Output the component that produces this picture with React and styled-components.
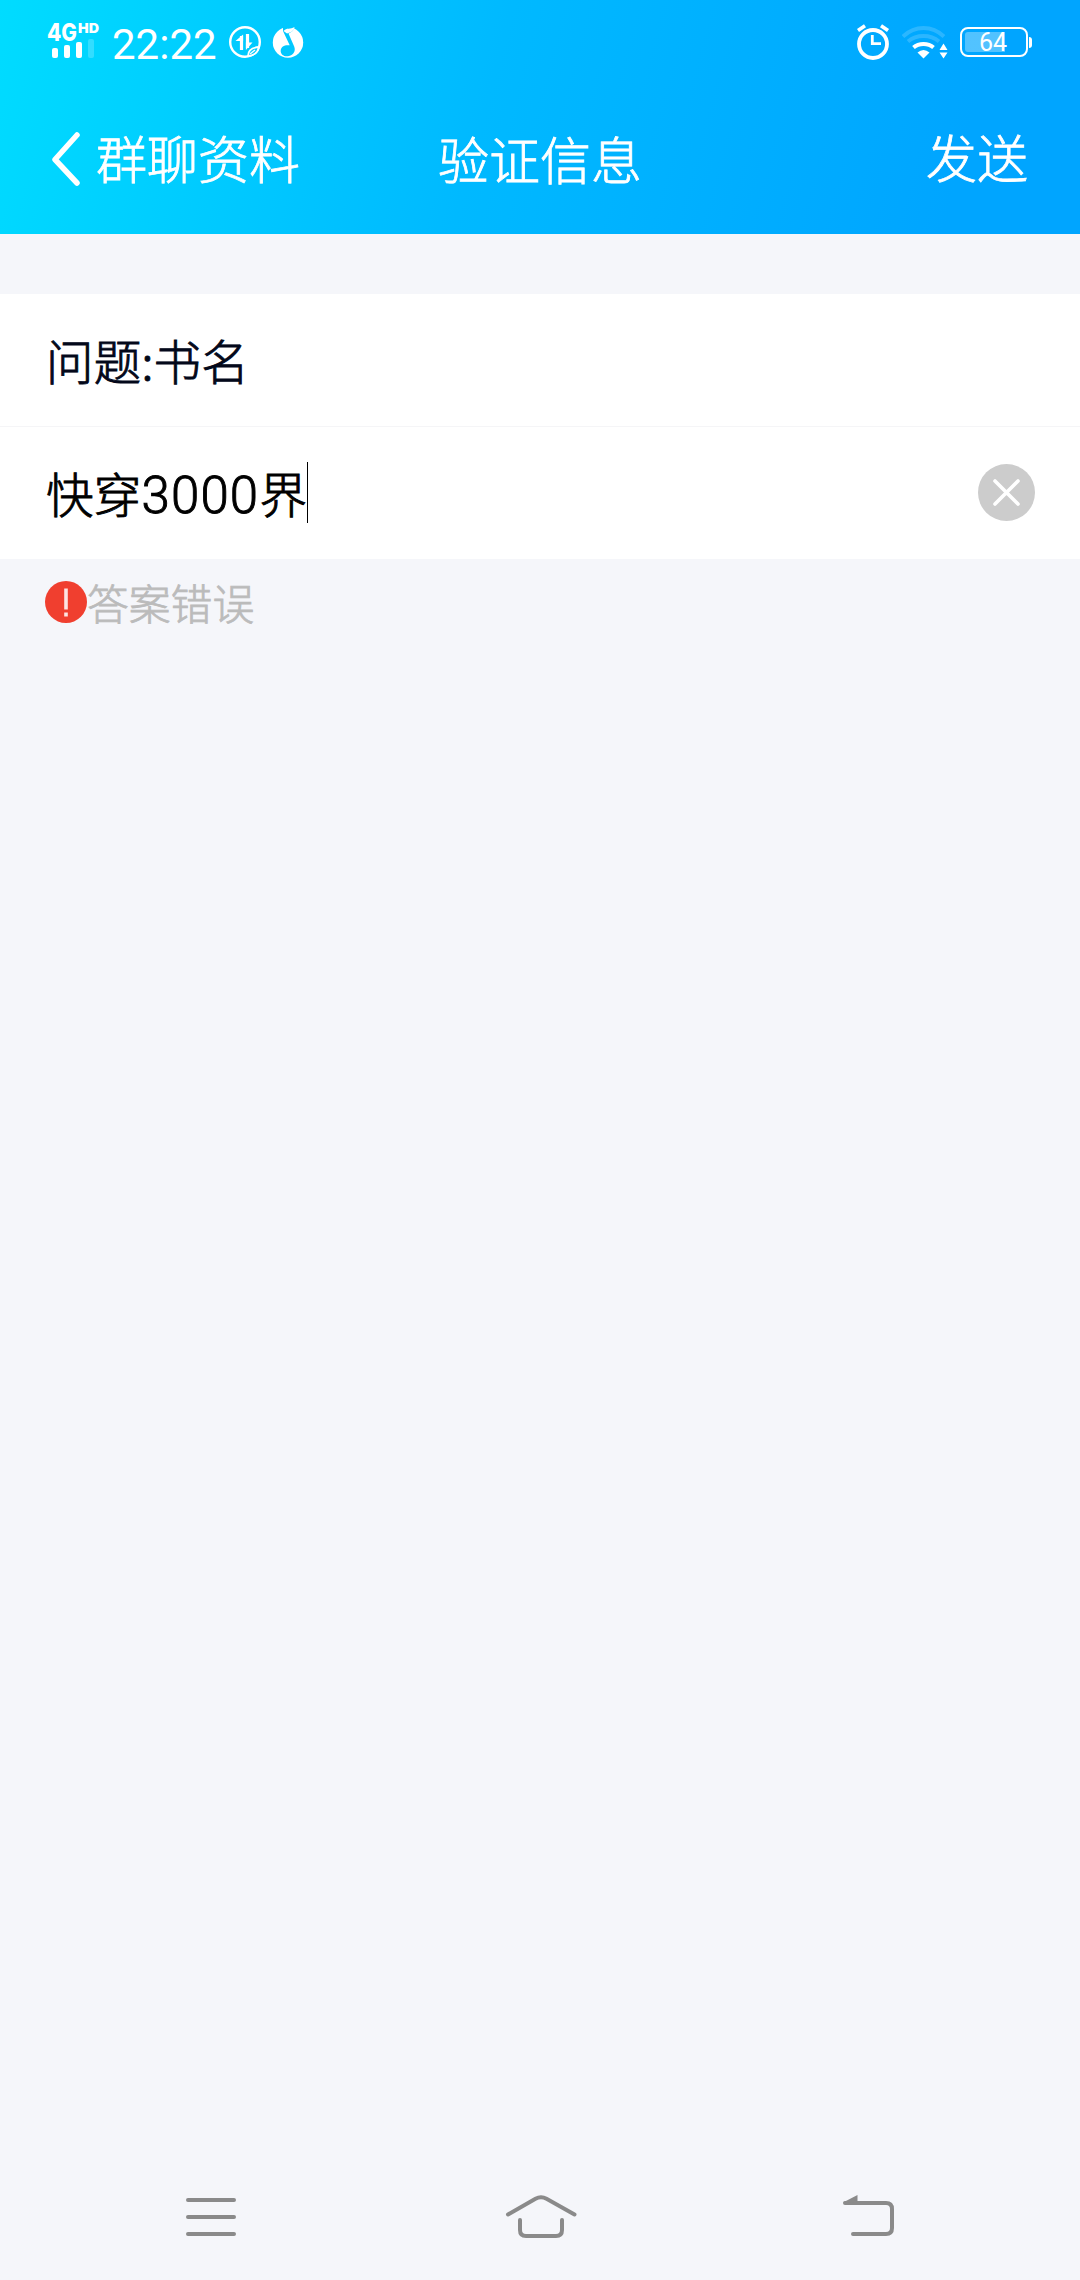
import React from 'react';
import styled, { createGlobalStyle } from 'styled-components';

const GlobalStyle = createGlobalStyle`
  * {
    box-sizing: border-box;
  }
  body {
    margin: 0;
    background: #f5f6fa;
    font-family: 'Noto Sans CJK SC', sans-serif;
  }
`;

const SignalIcon = () => (
  <svg width="53" height="52" viewBox="0 0 53 52" fill="#fff">
    <text x="0" y="25" fontFamily="Inter" fontSize="24" fontWeight="800" textLength="30" lengthAdjust="spacingAndGlyphs">
      4G
    </text>
    <text x="31" y="17" fontFamily="Inter" fontSize="13.5" fontWeight="900" textLength="21" lengthAdjust="spacingAndGlyphs">
      HD
    </text>
    <rect x="5" y="32" width="6" height="10" rx="2" />
    <rect x="17" y="29" width="6" height="13" rx="2" />
    <rect x="29" y="26" width="6" height="16" rx="2" />
    <rect x="41" y="23" width="6" height="19" rx="2" opacity="0.2" />
  </svg>
);

const DataIcon = () => (
  <svg width="32" height="32" viewBox="0 0 32 32" fill="none" stroke="#fff">
    <circle cx="16" cy="16" r="14.8" strokeWidth="2.4" />
    <path d="M12.500 24V10M18.500 8v14" strokeWidth="3.200" />
    <path d="M14.100 8.500V15H6.500zM16.900 24V16.500H23.500z" fill="#fff" stroke="none" />
    <path d="M19 30c0-5 4-8.500 11-9-1 5-5 8.500-11 9z" fill="#00ccff" strokeWidth="1.800" />
    <path d="M21 28l5-4" strokeWidth="1.400" />
  </svg>
);

const MusicIcon = () => (
  <svg width="32" height="32" viewBox="0 0 32 32">
    <circle cx="16" cy="16.500" r="15.200" fill="#fff" />
    <path
      d="M11 0h11.500L21 4.500c-1.500 1.500-3 2.300-4.500 3l5.700 13c1.800 4.500-.8 8.600-5.200 9.600-5 1-8.600-1.600-8.300-5.600.4-4.300 4.300-5.900 9-5.200L11 5z"
      fill="#00c8ff"
    />
    <path d="M11.500 5C14.500 1.500 18.500 3.500 22.500 1c-.3 3.500-3.200 5.500-7.500 6.500z" fill="#fff" />
  </svg>
);

const AlarmIcon = () => (
  <svg width="34" height="36" viewBox="0 0 34 36" fill="none" stroke="#fff">
    <circle cx="16" cy="20" r="14" strokeWidth="3.800" />
    <path d="M15.300 11v8.700H24" strokeWidth="2.800" />
    <path d="M1 6.500l7-4.800M31 6.500l-7-4.800" strokeWidth="3.600" />
  </svg>
);

const WifiIcon = () => (
  <svg width="47" height="34" viewBox="0 0 47 34" fill="none" stroke="#fff">
    <path d="M1 11.500Q10 3 21.500 3T42 11.500" strokeWidth="3.800" opacity="0.17" />
    <path d="M6 16.500Q12.500 11 21.500 11T37 16.500" strokeWidth="3.800" opacity="0.17" />
    <path d="M11.500 22.500Q15.500 19 21.500 19t10 3.500" strokeWidth="4" />
    <path d="M15.500 27.500q6-5 12 0l-6 6z" fill="#fff" stroke="none" />
    <path d="M41.500 18.500l4 6.500h-8zM41.500 33.500l-4-6h8z" fill="#fff" stroke="none" />
  </svg>
);

const BackIcon = () => (
  <svg width="28" height="54" viewBox="0 0 28 54" fill="none">
    <path
      d="M25 3L3 27.500 25 51"
      stroke="#fff"
      strokeWidth="5.500"
      strokeLinecap="round"
      strokeLinejoin="round"
    />
  </svg>
);

const ClearIcon = () => (
  <svg width="57" height="57" viewBox="0 0 57 57">
    <circle cx="28.500" cy="28.500" r="28.500" fill="#ccc" />
    <path d="M17 17l23 23M40 17l-23 23" stroke="#fff" strokeWidth="3.600" strokeLinecap="round" />
  </svg>
);

const ErrorIcon = () => (
  <svg width="42" height="42" viewBox="0 0 42 42">
    <circle cx="21" cy="21" r="21" fill="#f03f2f" />
    <path d="M21 7.500v21M21 31.500v4" stroke="#fde4e2" strokeWidth="3.600" />
  </svg>
);

const MenuIcon = () => (
  <svg width="50" height="44" viewBox="0 0 50 44" stroke="#8a8a8a" strokeWidth="4" strokeLinecap="round">
    <path d="M2 5h46M2 22h46M2 39h46" />
  </svg>
);

const HomeIcon = () => (
  <svg width="76" height="44" viewBox="0 0 76 44" fill="none" stroke="#8a8a8a" strokeWidth="4" strokeLinecap="round">
    <path d="M7 19.500L34.500 3.700q5.500-3 11 0L73.500 19.500" />
    <path d="M19 25v10q0 6 6 6h30q6 0 6-6V25" />
  </svg>
);

const ReturnIcon = () => (
  <svg width="52" height="44" viewBox="0 0 52 44" fill="none" stroke="#8a8a8a" strokeWidth="4" strokeLinecap="round">
    <path d="M3 8h41q6 0 6 6v19q0 6-6 6H11" />
    <path d="M1 7.500L15.500 0v8z" fill="#8a8a8a" stroke="none" />
  </svg>
);

const App = () => (
  <Screen>
    <GlobalStyle />
    <Header>
      <StatusBar>
        <StatusGroup>
          <SignalIcon />
          <Clock>22:22</Clock>
          <DataIcon />
          <MusicIcon />
        </StatusGroup>
        <StatusGroup>
          <AlarmIcon />
          <WifiIcon />
          <Battery>
            <BatteryBody>64</BatteryBody>
            <BatteryTip />
          </Battery>
        </StatusGroup>
      </StatusBar>
      <TitleBar>
        <BackButton>
          <BackIcon />
          <BarText lift={5}>群聊资料</BarText>
        </BackButton>
        <BarText lift={3}>验证信息</BarText>
        <SendButton lift={7}>发送</SendButton>
      </TitleBar>
    </Header>
    <Form>
      <Row divided>
        <RowText color="#03081a">问题:书名</RowText>
      </Row>
      <Row>
        <RowText color="#000">
          快穿<Digits>3000</Digits>界
        </RowText>
        <Caret />
        <ClearButton>
          <ClearIcon />
        </ClearButton>
      </Row>
    </Form>
    <ErrorHint>
      <ErrorIcon />
      <HintText>答案错误</HintText>
    </ErrorHint>
    <NavBar>
      <MenuIcon />
      <HomeIcon />
      <ReturnIcon />
    </NavBar>
  </Screen>
);

const Screen = styled.div`
  display: flex;
  flex-direction: column;
  width: 1080px;
  height: 2280px;
  background: #f5f6fa;
`;

const Header = styled.header`
  height: 234px;
  background: linear-gradient(105deg, #00dcff 0%, #00b9ff 45%, #00a5ff 88%);
  color: #fff;
`;

const StatusBar = styled.div`
  display: flex;
  justify-content: space-between;
  height: 84px;
  padding: 0 48px 0 47px;
`;

const StatusGroup = styled.div`
  display: flex;
  align-items: center;
  gap: 11px;
`;

const Clock = styled.span`
  width: 107px;
  margin-top: 5px;
  padding-left: 1px;
  font: 400 42px/50px Roboto, sans-serif;
  white-space: nowrap;
`;

const Battery = styled.div`
  display: flex;
  align-items: center;
`;

const BatteryBody = styled.div`
  width: 68px;
  height: 30px;
  border: 2px solid #fff;
  border-radius: 8px;
  background: linear-gradient(90deg, rgba(255, 255, 255, 0.32) 69%, transparent 69%) content-box;
  padding: 3px;
  font: 400 25px/21px Roboto, sans-serif;
  text-align: center;
  text-indent: -2px;
`;

const BatteryTip = styled.div`
  width: 3px;
  height: 11px;
  margin-left: 1px;
  border-radius: 0 3px 3px 0;
  background: #fff;
`;

const TitleBar = styled.div`
  display: grid;
  grid-template-columns: 1fr auto 1fr;
  align-items: center;
  height: 150px;
  padding: 0 52px;
`;

const BackButton = styled.div`
  display: flex;
  align-items: center;
  gap: 16px;
`;

const BarText = styled.div`
  padding-bottom: ${props => props.lift}px;
  font-size: 51px;
  font-weight: 300;
  line-height: 74px;
  -webkit-text-stroke: 0.8px currentColor;
`;

const SendButton = styled(BarText)`
  text-align: right;
`;

const Form = styled.section`
  margin-top: 60px;
  background: #fff;
`;

const Row = styled.div`
  display: flex;
  align-items: center;
  height: ${props => (props.divided ? 133 : 132)}px;
  padding: 0 45px 0 46px;
  border-bottom: ${props => (props.divided ? '1px solid #f5f5f7' : 'none')};
`;

const RowText = styled.div`
  padding-bottom: 2px;
  color: ${props => props.color};
  font-size: 47.5px;
  font-weight: 300;
  letter-spacing: 0.2px;
  -webkit-text-stroke: 0.9px currentColor;
`;

const Digits = styled.span`
  font-family: Roboto, sans-serif;
  font-size: 51px;
  line-height: 1;
  letter-spacing: 1.2px;
`;

const Caret = styled.div`
  width: 1px;
  height: 61px;
  margin-bottom: 1px;
  background: #000;
`;

const ClearButton = styled.div`
  display: flex;
  margin: 0 0 1px auto;
`;

const ErrorHint = styled.div`
  display: flex;
  align-items: center;
  height: 86px;
  padding: 0 45px;
`;

const HintText = styled.span`
  padding-bottom: 1px;
  color: #bbb;
  font-size: 41.8px;
  font-weight: 300;
  -webkit-text-stroke: 0.8px currentColor;
`;

const NavBar = styled.nav`
  display: flex;
  justify-content: space-between;
  align-items: center;
  height: 126px;
  margin-top: auto;
  padding: 0 186px;
`;

export default App;
